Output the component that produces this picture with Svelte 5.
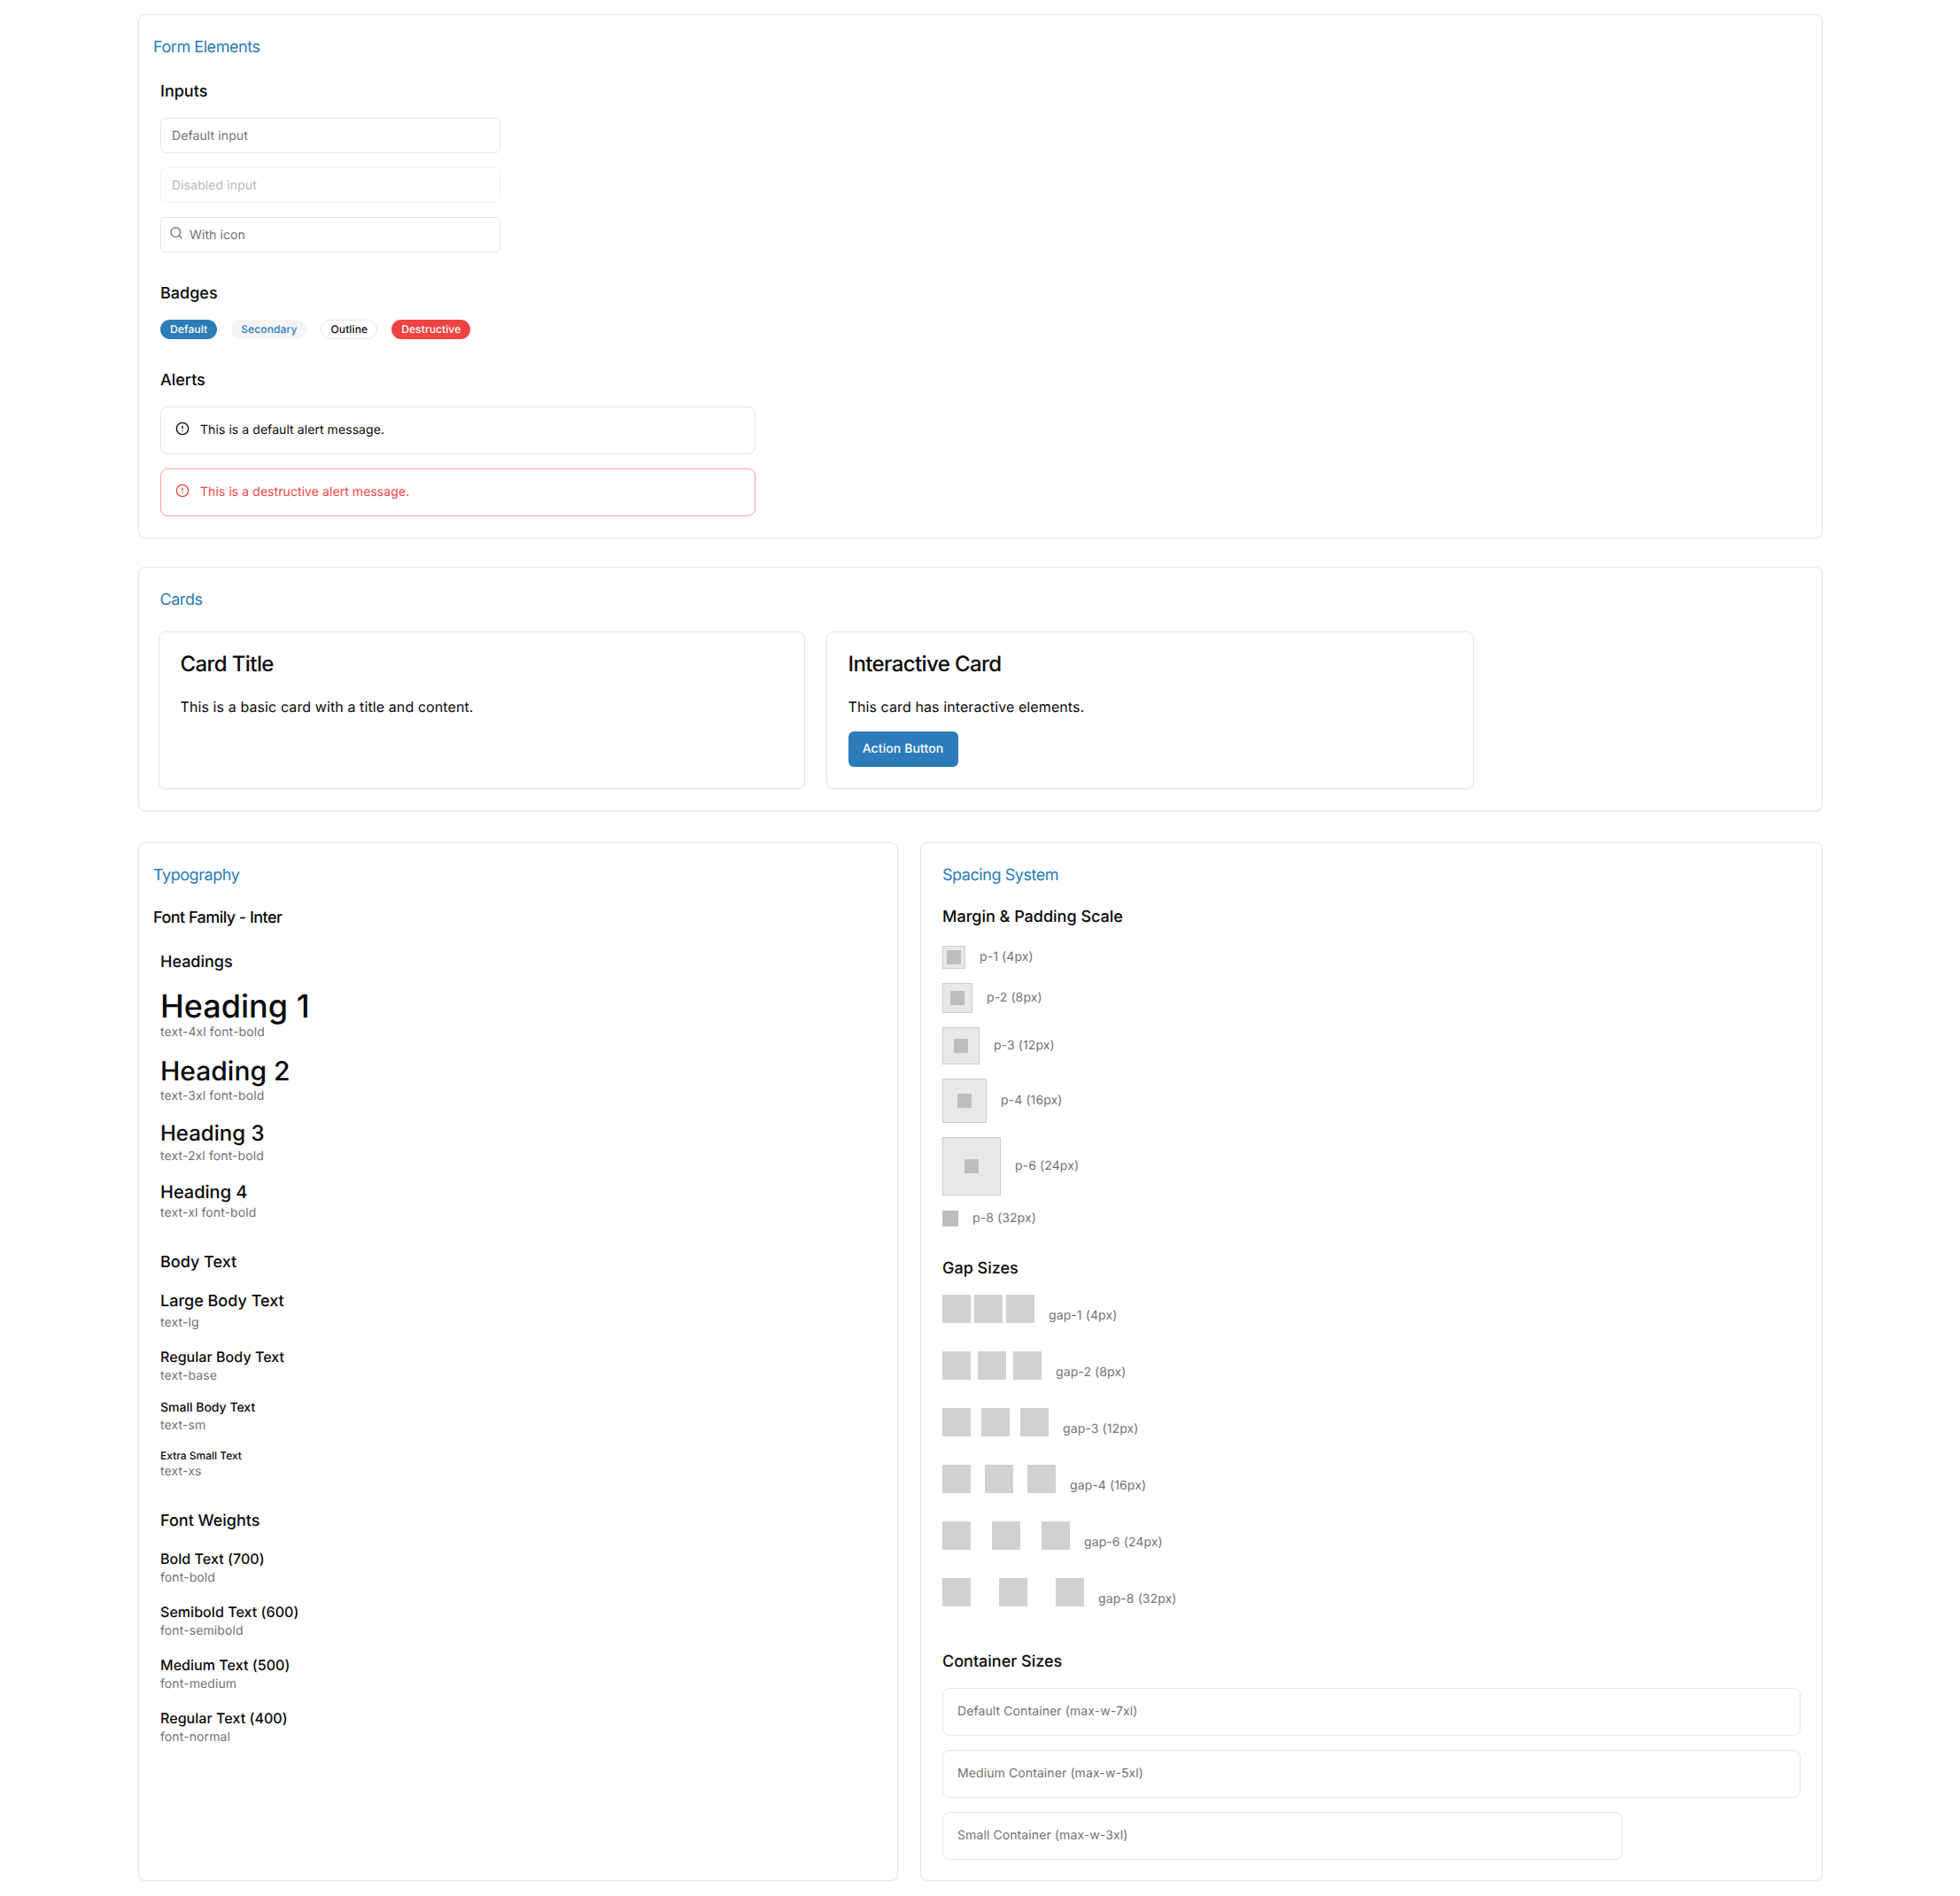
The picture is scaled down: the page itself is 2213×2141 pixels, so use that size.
<script>
  const inputs = [
    { placeholder: 'Default input', disabled: false },
    { placeholder: 'Disabled input', disabled: true }
  ];
  const badges = [
    { label: 'Default', kind: 'primary' },
    { label: 'Secondary', kind: 'secondary' },
    { label: 'Outline', kind: 'outline' },
    { label: 'Destructive', kind: 'danger' }
  ];
  const alerts = [
    { text: 'This is a default alert message.', kind: '' },
    { text: 'This is a destructive alert message.', kind: 'danger' }
  ];
  const headings = [
    { text: 'Heading 1', cls: 'h1', note: 'text-4xl font-bold' },
    { text: 'Heading 2', cls: 'h2', note: 'text-3xl font-bold' },
    { text: 'Heading 3', cls: 'h3', note: 'text-2xl font-bold' },
    { text: 'Heading 4', cls: 'h4', note: 'text-xl font-bold' }
  ];
  const body = [
    { text: 'Large Body Text', cls: 'lg', note: 'text-lg' },
    { text: 'Regular Body Text', cls: 'base', note: 'text-base' },
    { text: 'Small Body Text', cls: 'sm', note: 'text-sm' },
    { text: 'Extra Small Text', cls: 'xs', note: 'text-xs' }
  ];
  const weights = [
    { text: 'Bold Text (700)', note: 'font-bold' },
    { text: 'Semibold Text (600)', note: 'font-semibold' },
    { text: 'Medium Text (500)', note: 'font-medium' },
    { text: 'Regular Text (400)', note: 'font-normal' }
  ];
  const paddings = [
    { label: 'p-1 (4px)', pad: 4 },
    { label: 'p-2 (8px)', pad: 8 },
    { label: 'p-3 (12px)', pad: 12 },
    { label: 'p-4 (16px)', pad: 16 },
    { label: 'p-6 (24px)', pad: 24 }
  ];
  const gaps = [
    { label: 'gap-1 (4px)', gap: 4 },
    { label: 'gap-2 (8px)', gap: 8 },
    { label: 'gap-3 (12px)', gap: 12 },
    { label: 'gap-4 (16px)', gap: 16 },
    { label: 'gap-6 (24px)', gap: 24 },
    { label: 'gap-8 (32px)', gap: 32 }
  ];
  const containers = [
    { label: 'Default Container (max-w-7xl)', cls: '' },
    { label: 'Medium Container (max-w-5xl)', cls: '' },
    { label: 'Small Container (max-w-3xl)', cls: 'small' }
  ];
</script>

<main class="page">
  <section class="panel forms">
    <h2 class="title">Form Elements</h2>
    <div class="inset">
      <h3 class="sub">Inputs</h3>
      <div class="inputs">
        {#each inputs as input}
          <input class="input" placeholder={input.placeholder} disabled={input.disabled} />
        {/each}
        <div class="with-icon">
          <svg class="search" viewBox="0 0 24 24" fill="none" stroke="currentColor" stroke-width="2" stroke-linecap="round" stroke-linejoin="round">
            <circle cx="11" cy="11" r="8" />
            <path d="m21 21-4.3-4.3" />
          </svg>
          <input class="input iconed" placeholder="With icon" />
        </div>
      </div>

      <h3 class="sub badges-title">Badges</h3>
      <div class="badges">
        {#each badges as b}
          <span class="badge {b.kind}">{b.label}</span>
        {/each}
      </div>

      <h3 class="sub alerts-title">Alerts</h3>
      <div class="alerts">
        {#each alerts as a}
          <div class="alert {a.kind}">
            <svg viewBox="0 0 24 24" fill="none" stroke="currentColor" stroke-width="2" stroke-linecap="round" stroke-linejoin="round">
              <circle cx="12" cy="12" r="10" />
              <line x1="12" y1="8" x2="12" y2="12" />
              <line x1="12" y1="16" x2="12.01" y2="16" />
            </svg>
            <span>{a.text}</span>
          </div>
        {/each}
      </div>
    </div>
  </section>

  <section class="panel cards">
    <h2 class="title cards-title">Cards</h2>
    <div class="card-grid">
      <article class="card">
        <h3 class="card-title">Card Title</h3>
        <p>This is a basic card with a title and content.</p>
      </article>
      <article class="card">
        <h3 class="card-title">Interactive Card</h3>
        <p>This card has interactive elements.</p>
        <button class="action">Action Button</button>
      </article>
    </div>
  </section>

  <div class="split">
    <section class="panel typography">
      <h2 class="title">Typography</h2>
      <h3 class="family">Font Family - Inter</h3>
      <div class="inset">
        <h3 class="sub head-sub">Headings</h3>
        <div class="samples">
          {#each headings as h}
            <div>
              <div class={h.cls}>{h.text}</div>
              <div class="note">{h.note}</div>
            </div>
          {/each}
        </div>
        <h3 class="sub group">Body Text</h3>
        <div class="samples">
          {#each body as b}
            <div>
              <div class={b.cls}>{b.text}</div>
              <div class="note">{b.note}</div>
            </div>
          {/each}
        </div>
        <h3 class="sub group">Font Weights</h3>
        <div class="samples">
          {#each weights as w}
            <div>
              <div class="base">{w.text}</div>
              <div class="note">{w.note}</div>
            </div>
          {/each}
        </div>
      </div>
    </section>

    <section class="panel spacing">
      <h2 class="title spacing-title">Spacing System</h2>
      <h3 class="sub scale">Margin &amp; Padding Scale</h3>
      <div class="pads">
        {#each paddings as p}
          <div class="pad-row">
            <div class="pad-box" style="padding: {p.pad}px"><div class="pad-inner"></div></div>
            <span class="note">{p.label}</span>
          </div>
        {/each}
        <div class="pad-row">
          <div class="pad-bare"></div>
          <span class="note">p-8 (32px)</span>
        </div>
      </div>

      <h3 class="sub gap-title">Gap Sizes</h3>
      <div class="gap-rows">
        {#each gaps as g}
          <div class="gap-row">
            <div class="squares" style="gap: {g.gap}px">
              <div class="square"></div>
              <div class="square"></div>
              <div class="square"></div>
            </div>
            <span class="note gap-label">{g.label}</span>
          </div>
        {/each}
      </div>

      <h3 class="sub container-title">Container Sizes</h3>
      <div class="containers">
        {#each containers as c}
          <div class="container {c.cls}">{c.label}</div>
        {/each}
      </div>
    </section>
  </div>
</main>

<style>
  :global(body) {
    margin: 0;
    background: #fff;
    color: #0a0a0a;
    font-family: Inter, "Liberation Sans", sans-serif;
    font-optical-sizing: none;
    text-rendering: geometricPrecision;
  }
  * { box-sizing: border-box; }
  h2, h3, p { margin: 0; font-weight: 400; }

  .page {
    margin: 0 155px 0 156px;
    padding: 16px 0 18px;
  }
  .panel {
    background: #fff;
    border: 1px solid #e5e5e5;
    border-radius: 8px;
    box-shadow: 0 1px 2px rgba(0, 0, 0, 0.05);
  }
  .title {
    font-size: 18px;
    line-height: 28px;
    letter-spacing: -0.025em;
    color: #2b7cb8;
    margin-bottom: 22px;
  }
  .sub {
    font-size: 18px;
    line-height: 28px;
    font-weight: 450;
    margin-bottom: 15px;
  }

  .forms { padding: 23px 24px 24px 16px; }
  .inset { padding-left: 8px; }
  .inputs { display: flex; flex-direction: column; gap: 16px; width: 384px; }
  .input {
    display: block;
    width: 100%;
    height: 40px;
    padding: 0 12px;
    border: 1px solid #e5e5e5;
    border-radius: 6px;
    background: #fff;
    font: 14px/20px Inter, sans-serif;
    letter-spacing: 0.1px;
    font-optical-sizing: none;
    text-rendering: geometricPrecision;
    color: #0a0a0a;
  }
  .input::placeholder { color: #737373; opacity: 1; }
  .input:disabled { opacity: 0.5; }
  .with-icon { position: relative; }
  .search {
    position: absolute;
    left: 10px;
    top: 10px;
    width: 16px;
    height: 16px;
    color: #737373;
  }
  .iconed { padding-left: 32px; }

  .badges-title { margin-top: 33px; }
  .badges { display: flex; gap: 16px; }
  .badge {
    display: inline-flex;
    align-items: center;
    height: 22px;
    padding: 0 10px;
    border: 1px solid transparent;
    border-radius: 999px;
    font-size: 12px;
    line-height: 16px;
    font-weight: 500;
    letter-spacing: 0.12px;
  }
  .badge.primary { background: #2b7cb8; color: #fff; }
  .badge.secondary { background: #f5f5f5; color: #2b7cb8; }
  .badge.outline { border-color: #e5e5e5; color: #0a0a0a; }
  .badge.danger { background: #ef4444; color: #fff; }

  .alerts-title { margin-top: 33px; }
  .alerts { display: flex; flex-direction: column; gap: 16px; width: 672px; }
  .alert {
    display: flex;
    align-items: flex-start;
    gap: 12px;
    padding: 16px;
    border: 1px solid #e5e5e5;
    border-radius: 8px;
    font-size: 14px;
    line-height: 20px;
    letter-spacing: 0.07px;
  }
  .alert svg { width: 16px; height: 16px; flex: none; }
  .alert.danger { color: #ef4444; border-color: rgba(239, 68, 68, 0.5); }

  .cards { margin-top: 32px; padding: 23px 24px 24px 21.5px; }
  .cards-title { padding-left: 2px; margin-bottom: 21px; }
  .card-grid { display: grid; grid-template-columns: 730px 731px; gap: 24px; }
  .card {
    min-height: 177px;
    padding: 24px;
    border: 1px solid #e5e5e5;
    border-radius: 8px;
    box-shadow: 0 1px 2px rgba(0, 0, 0, 0.05);
  }
  .card-title {
    font-size: 24px;
    line-height: 24px;
    font-weight: 450;
    letter-spacing: -0.025em;
    margin-bottom: 24px;
  }
  .card p { font-size: 16px; line-height: 24px; letter-spacing: 0.1px; }
  .action {
    display: block;
    margin-top: 16px;
    width: 124px;
    height: 40px;
    padding: 0;
    border: 0;
    border-radius: 6px;
    background: #2b7cb8;
    color: #fff;
    font: 500 14px/20px Inter, sans-serif;
    letter-spacing: 0.1px;
    font-optical-sizing: none;
    text-rendering: geometricPrecision;
  }

  .split {
    display: grid;
    grid-template-columns: 858px 1fr;
    gap: 25px;
    margin-top: 35px;
  }
  .typography { padding: 23px 24px 24px 16px; }
  .typography .title { margin-bottom: 20px; }
  .family { font-size: 18px; line-height: 28px; font-weight: 450; letter-spacing: -0.03em; margin-bottom: 22px; }
  .samples { display: flex; flex-direction: column; gap: 16px; }
  .group { margin-top: 32px; margin-bottom: 16px; }
  .h1 { font-size: 36px; line-height: 40px; font-weight: 450; }
  .h2 { font-size: 30px; line-height: 36px; font-weight: 450; }
  .h3 { font-size: 24px; line-height: 32px; font-weight: 450; }
  .h4 { font-size: 20px; line-height: 28px; font-weight: 450; }
  .lg { font-size: 18px; line-height: 28px; font-weight: 450; }
  .base { font-size: 16px; line-height: 24px; font-weight: 450; letter-spacing: 0.05px; }
  .sm { font-size: 14px; line-height: 20px; font-weight: 450; }
  .xs { font-size: 12px; line-height: 16px; font-weight: 450; }
  .note { font-size: 14px; line-height: 20px; letter-spacing: 0.1px; color: #737373; }

  .spacing { padding: 23px 24px 23px 24px; }
  .spacing-title { margin-bottom: 19px; }
  .scale { margin-bottom: 18px; }
  .pads { display: flex; flex-direction: column; gap: 16px; }
  .pad-row { display: flex; align-items: center; gap: 16px; }
  .pad-box { background: #e8e8e8; border: 1px solid #ccc; }
  .pad-inner { width: 16px; height: 16px; background: #bdbdbd; }
  .pad-bare { width: 18px; height: 18px; background: #bdbdbd; }

  .gap-title { margin-top: 33px; margin-bottom: 15px; }
  .gap-rows { display: flex; flex-direction: column; gap: 32px; }
  .gap-row { display: flex; align-items: flex-end; gap: 16px; }
  .squares { display: flex; }
  .square { width: 32px; height: 32px; background: #d1d1d1; }
  .gap-label { margin-bottom: -2px; }

  .container-title { margin-top: 49px; margin-bottom: 15px; }
  .containers { display: flex; flex-direction: column; gap: 16px; }
  .container {
    padding: 16px;
    border: 1px solid #e5e5e5;
    border-radius: 8px;
    font-size: 14px;
    line-height: 20px;
    letter-spacing: 0.1px;
    color: #737373;
  }
  .container.small { width: 768px; }
</style>
